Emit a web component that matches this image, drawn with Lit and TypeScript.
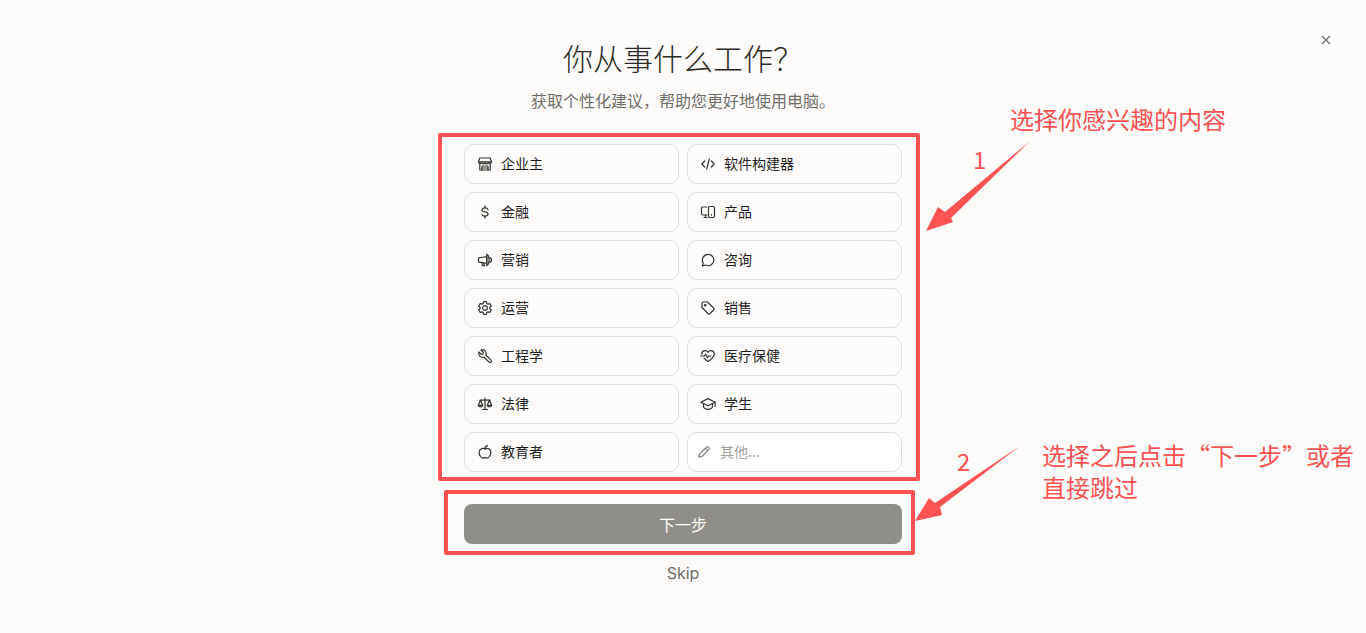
import { LitElement, html, css, svg } from "lit";
import { customElement } from "lit/decorators.js";

const ICONS: Record<string, any> = {
  store: svg`<path d="M2.800 7.600v6.400h10.400V7.600"/><path d="M2.800 2h10.400l1.300 3.800a1.700 1.700 0 0 1-3.200.7 1.700 1.700 0 0 1-3.300 0 1.700 1.700 0 0 1-3.300 0 1.700 1.700 0 0 1-3.200-.7z"/><path d="M1.500 5.800h13"/><path d="M5 14V10h6v4"/><path d="M5 12h6"/>`,
  code: svg`<path d="M4.700 5 1.800 8l2.900 3"/><path d="M11.300 5l2.900 3-2.900 3"/><path d="M9.300 3 6.700 13"/>`,
  dollar: svg`<path d="M8 1.800v2M8 12.200v2"/><path d="M11 5.600C10.700 4.500 9.600 3.800 8 3.800c-1.800 0-3 .9-3 2.100C5 7.300 6.300 7.800 8 8c1.800.2 3 .9 3 2.100s-1.200 2.100-3 2.100c-1.700 0-2.800-.7-3.100-1.900"/>`,
  devices: svg`<path d="M7 11H2.700A1.200 1.200 0 0 1 1.500 9.800V4.200A1.200 1.200 0 0 1 2.700 3H7"/><path d="M4 13.500h3"/><path d="M5.500 11v2.500"/><rect x="8.500" y="2.500" width="6" height="11" rx="1.200"/><path d="M11.500 10.500v.7"/>`,
  megaphone: svg`<path d="M9.800 4.600 4.700 5.500H2.800A1.300 1.300 0 0 0 1.500 6.800v2.200a1.300 1.300 0 0 0 1.300 1.300h1.900l5.100 1.200z"/><path d="M9.800 2.200c1.400.7 2.300 3 2.300 5.700s-.9 5-2.300 5.700z"/><path d="M12 5.600c1.300 0 2.500 1 2.500 2.300s-1.200 2.300-2.500 2.300"/><path d="M4.700 10.300l.8 3.400h1.900l-.7-3"/>`,
  chat: svg`<path d="M8.200 2.300a5.700 5.700 0 1 1-2.800 10.700l-3 .8.800-2.900A5.700 5.700 0 0 1 8.200 2.300z"/>`,
  gear: svg`<circle cx="8" cy="8" r="2.300"/><path d="M6.700 1.500h2.600l.5 2 1.200.7 2-.5 1.300 2.300-1.500 1.400v1.200l1.500 1.400-1.300 2.300-2-.5-1.200.7-.5 2H6.700l-.5-2-1.200-.7-2 .5-1.300-2.300 1.500-1.400V7.400L1.700 6l1.300-2.300 2 .5 1.200-.7z"/>`,
  tag: svg`<path d="M2 3.200A1.200 1.200 0 0 1 3.200 2h4.300l6.200 6.200a1.300 1.300 0 0 1 0 1.800l-3.700 3.700a1.300 1.300 0 0 1-1.800 0L2 7.500z"/><circle cx="5.200" cy="5.200" r=".7"/>`,
  wrench: svg`<path d="M14.200 12.300 8.900 7a3.900 3.900 0 0 0-5-5l2.400 2.300-.4 1.700-1.700.4L1.900 4a3.900 3.900 0 0 0 5 5l5.300 5.200a1.400 1.400 0 0 0 2-1.900z"/>`,
  heart: svg`<path d="M1.800 6.200C1.500 2.800 6 1.200 8 4.300c2-3.100 6.500-1.500 6.200 1.900C14 9.300 9.800 12.300 8 13.500 7 12.900 5.300 11.700 4 10.200"/><path d="M.9 8h3.400l1.300-1.800 1.900 3.200 1.300-1.400h1.700"/>`,
  scales: svg`<path d="M8 2v11.500"/><path d="M5.500 13.500h5"/><path d="M3 4.200h10"/><path d="M3.500 4.200 1.300 9.300a2.300 2.300 0 0 0 4.400 0z"/><path d="M12.500 4.200l-2.200 5.100a2.300 2.300 0 0 0 4.400 0z"/><path d="M1.300 9.300h4.400M10.300 9.300h4.400"/>`,
  grad: svg`<path d="M.9 6.200 8 2.600l7.100 3.600L8 9.800z"/><path d="M3.600 7.500v3.600c0 .9 2 2.300 4.400 2.300s4.400-1.400 4.400-2.300V7.500"/><path d="M15.100 6.200v4"/>`,
  apple: svg`<path d="M8 5C6.500 3.900 2.400 3.900 2.200 8.200c-.1 2.900 1.900 5.900 3.600 5.900.9 0 1.400-.5 2.200-.5s1.300.5 2.200.5c1.700 0 3.700-3 3.600-5.900C13.600 3.900 9.500 3.900 8 5z"/><path d="M8 5c0-1.600.8-2.900 2.400-3.300"/>`,
  pencil: svg`<path d="M10.900 2.400a1.600 1.600 0 0 1 2.300 0l.4.400a1.600 1.600 0 0 1 0 2.300L5.500 13.200l-3.400.7.700-3.400z"/><path d="M9.500 3.800l2.700 2.700"/>`,
};

const ITEMS: [string, string][] = [
  ["store", "企业主"], ["code", "软件构建器"],
  ["dollar", "金融"], ["devices", "产品"],
  ["megaphone", "营销"], ["chat", "咨询"],
  ["gear", "运营"], ["tag", "销售"],
  ["wrench", "工程学"], ["heart", "医疗保健"],
  ["scales", "法律"], ["grad", "学生"],
  ["apple", "教育者"],
];

const icon = (n: string) => html`<svg class="ico" viewBox="0 0 16 16" width="16" height="16">${ICONS[n]}</svg>`;

@customElement("app-root")
export class AppRoot extends LitElement {
  static styles = css`
    :host {
      display: block;
      height: 633px;
      overflow: hidden;
      position: relative;
      background: #fdfcfb;
      font-family: "Noto Sans CJK SC", "Noto Sans", sans-serif;
    }
    .main {
      display: flex;
      flex-direction: column;
      align-items: center;
      padding-top: 35px;
    }
    h1 {
      margin: 0;
      font-size: 30px;
      line-height: 44px;
      font-weight: 300;
      color: #2b2a27;
    }
    .sub {
      margin: 9px 0 0;
      font-size: 16px;
      line-height: 24px;
      color: #6f6e69;
      font-weight: 400;
    }
    .grid {
      margin-top: 32px;
      width: 438px;
      display: grid;
      grid-template-columns: 215px 215px;
      gap: 8px;
    }
    .opt {
      box-sizing: border-box;
      height: 40px;
      display: flex;
      align-items: center;
      gap: 8px;
      padding: 0 0 2px 12px;
      border: 1px solid #e0dedb;
      border-radius: 10px;
      font-size: 14px;
      color: #1f1e1c;
    }
    .other {
      background: #fff;
      padding-left: 9px;
      gap: 9px;
      color: #a3a19c;
    }
    .other .ico { width: 14px; height: 14px; stroke: #75736e; }
    .ico {
      fill: none;
      stroke: #33322f;
      stroke-width: 1.200;
      stroke-linecap: round;
      stroke-linejoin: round;
      flex: none;
      margin-top: 2px;
    }
    .next {
      margin-top: 32px;
      width: 438px;
      height: 40px;
      display: flex;
      align-items: center;
      justify-content: center;
      border-radius: 8px;
      background: #908e88;
      color: #fdfcfb;
      font-size: 16px;
    }
    .skip {
      margin-top: 18px;
      font-family: Inter, "Noto Sans", sans-serif;
      font-size: 16px;
      line-height: 22px;
      color: #6f6e69;
    }
    .close {
      position: absolute;
      left: 1320px;
      top: 34px;
      width: 12px;
      height: 12px;
      fill: none;
      stroke: #6f6e69;
      stroke-width: 1.200;
    }
    .box {
      position: absolute;
      box-sizing: border-box;
      border: 4px solid #ff5252;
      border-radius: 2px;
    }
    .box1 { left: 438px; top: 133px; width: 482px; height: 348px; }
    .box2 { left: 444px; top: 490px; width: 471px; height: 65px; }
    .arrows { position: absolute; left: 0; top: 0; width: 1366px; height: 633px; pointer-events: none; }
    .arrows polygon { fill: #ff5252; }
    .note {
      position: absolute;
      color: #ff5252;
      font-size: 24px;
      line-height: 32px;
      white-space: nowrap;
    }
    .n1 { left: 1010px; top: 103px; }
    .n2 { left: 1042px; top: 439px; }
    .d1 { left: 973px; top: 143px; }
    .d2 { left: 957px; top: 445px; }
  `;

  render() {
    return html`
      <div class="main">
        <h1>你从事什么工作？</h1>
        <p class="sub">获取个性化建议，帮助您更好地使用电脑。</p>
        <div class="grid">
          ${ITEMS.map(([i, t]) => html`<div class="opt">${icon(i)}<span>${t}</span></div>`)}
          <div class="opt other">${icon("pencil")}<span>其他...</span></div>
        </div>
        <div class="next">下一步</div>
        <div class="skip">Skip</div>
      </div>
      <svg class="close" viewBox="0 0 12 12"><path d="M2 2l8 8M10 2l-8 8"/></svg>
      <div class="box box1"></div>
      <div class="box box2"></div>
      <svg class="arrows" viewBox="0 0 1366 633">
        <polygon points="1030,141 951,218 953,222 926,231 938,207 945,212" />
        <polygon points="1020,446 940,507 942,515 915,521 929,498 935,503" />
      </svg>
      <div class="note n1">选择你感兴趣的内容</div>
      <div class="note d1">1</div>
      <div class="note d2">2</div>
      <div class="note n2">选择之后点击“下一步”或者<br />直接跳过</div>
    `;
  }
}
